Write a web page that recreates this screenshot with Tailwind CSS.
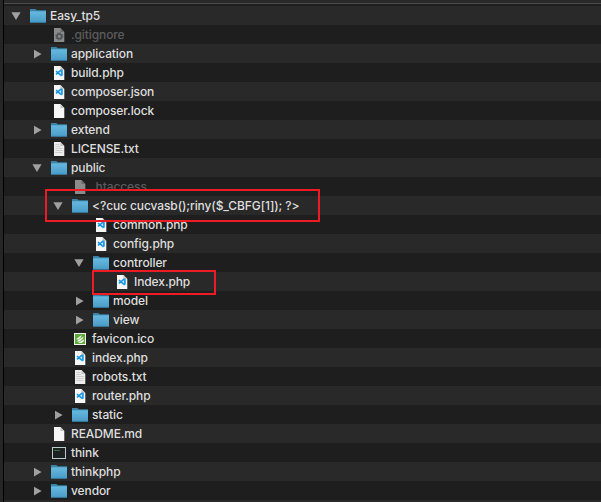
<!DOCTYPE html>
<html lang="en">
<head>
<meta charset="utf-8">
<title>Easy_tp5</title>
<script src="https://cdn.jsdelivr.net/npm/@tailwindcss/browser@4"></script>
</head>
<body class="relative w-[601px] h-[502px] overflow-hidden bg-[#1e1e1e] font-['Inter','Liberation_Sans',sans-serif]">
<svg class="absolute size-0">
  <defs>
    <linearGradient id="blue" x1="0" y1="0" x2="0" y2="1"><stop offset="0" stop-color="#66b9df"/><stop offset="1" stop-color="#4a9cc8"/></linearGradient>
    <symbol id="down" viewBox="0 0 16 16"><path d="M3.4 4.2h9.2L8 12z" fill="#a0a0a0"/></symbol>
    <symbol id="right" viewBox="0 0 16 16"><path d="M5 3.8v8.6l7.6-4.3z" fill="#a0a0a0"/></symbol>
    <symbol id="folder" viewBox="0 0 16 16"><path d="M0 1h5.2L7 2.3h9V7H0z" fill="#3c83a5"/><path d="M0 3.3h16V14.6H0z" fill="url(#blue)"/><path d="M0 14.3h16" stroke="#347da4" stroke-width=".6"/></symbol>
    <symbol id="page" viewBox="0 0 16 16"><path d="M3 1h6.5L13.3 5V15H3z" fill="#f7f7f7"/><path d="M9.5 1L13.3 5H9.5z" fill="#c2c2c2"/></symbol>
    <symbol id="code" viewBox="0 0 16 16"><use href="#page"/><path d="M10 5.2L5 9.4M5 6.1l5 4.2" stroke="#1696df" stroke-width="1.6" fill="none"/><path d="M9.8 4.2l2 .8v5.6l-2 .8z" fill="#229fe8"/></symbol>
    <symbol id="text" viewBox="0 0 16 16"><path d="M3 1h6.5L13.3 5V15H3z" fill="#ededed"/><path d="M9.5 1L13.3 5H9.5z" fill="#c2c2c2"/><path d="M4.3 3.5h4M4.3 5.5h5M4.3 7.5h7.5M4.3 9.5h7.5M4.3 11.5h7" stroke="#c4c4c4" stroke-width=".8"/></symbol>
    <symbol id="dim" viewBox="0 0 16 16"><path d="M3 1h6.5L13.3 5V15H3z" fill="#8b8b8b"/><path d="M9.5 1L13.3 5H9.5z" fill="#696969"/></symbol>
    <symbol id="gear" viewBox="0 0 16 16"><use href="#dim"/><circle cx="8.3" cy="9.3" r="2.4" fill="none" stroke="#4b4f51" stroke-width="1.5"/><circle cx="8.3" cy="9.3" r="3.6" fill="none" stroke="#4b4f51" stroke-width="1" stroke-dasharray="1.4 1.43"/></symbol>
    <symbol id="favicon" viewBox="0 0 16 16"><path d="M2 2h12v12H2z" fill="#f2f5ee"/><path d="M3 3h10v10H3z" fill="#5da83b"/><path d="M4 8.2L9.6 4 9 6.2 6.5 8.6zM4.3 10.4L11.6 5.4 11 7.6 7.6 10.4zM6 12L12.2 8.2C12 10.8 10.5 12 8.5 12z" fill="#edf7e8"/></symbol>
    <symbol id="terminal" viewBox="0 0 16 16"><path d="M1 2h14v12H1z" fill="#b8c8cf"/><path d="M2 3h12v10H2z" fill="#1e2122"/><path d="M3.5 5.5h5" stroke="#489550" stroke-width="1" stroke-dasharray="1.3 .6"/></symbol>
  </defs>
</svg>
<main class="flex h-full">
  <div class="w-[4px] shrink-0 border-r border-black bg-[#262626]"></div>
  <div class="flex-1">
    <div class="h-[6px] bg-[#1e1e1e]"><div class="h-[4px] border-b border-[#4c4c4c] bg-[#292929]"></div></div>
    <div id="tree"></div>
    <div class="h-[2px] bg-[#292929]"></div>
  </div>
</main>
<div class="absolute left-[45px] top-[189px] w-[275px] h-[33px] border-2 border-[#ed1c24]"></div>
<div class="absolute left-[92px] top-[270px] w-[124px] h-[25px] border-2 border-[#ed1c24]"></div>
<script>
const rows = [
  [0,'down','folder','Easy_tp5'],[1,'','gear','.gitignore'],[1,'right','folder','application'],
  [1,'','code','build.php'],[1,'','code','composer.json'],[1,'','page','composer.lock'],
  [1,'right','folder','extend'],[1,'','text','LICENSE.txt'],[1,'down','folder','public'],
  [2,'','dim','.htaccess'],[2,'down','folder','<?cuc cucvasb();riny($_CBFG[1]); ?>'],
  [3,'','code','common.php'],[3,'','code','config.php'],[3,'down','folder','controller'],
  [4,'','code','Index.php'],[3,'right','folder','model'],[3,'right','folder','view'],
  [2,'','favicon','favicon.ico'],[2,'','code','index.php'],[2,'','text','robots.txt'],
  [2,'','code','router.php'],[2,'right','folder','static'],[1,'','page','README.md'],
  [1,'','terminal','think'],[1,'right','folder','thinkphp'],[1,'right','folder','vendor']
];
const tree = document.getElementById('tree');
for (const [depth, arrow, icon, name] of rows) {
  const row = document.createElement('div');
  row.className = 'flex h-[19px] items-center odd:bg-[#292929] even:bg-[#1e1e1e]';
  row.style.paddingLeft = (4 + depth * 21) + 'px';
  row.innerHTML = `<svg class="size-4 shrink-0"><use href="#${arrow}"/></svg><svg class="ml-[6px] size-4 shrink-0"><use href="#${icon}"/></svg>`;
  const label = document.createElement('span');
  const dim = icon === 'gear' || icon === 'dim';
  label.className = dim ? 'ml-[4px] whitespace-pre text-[12px] font-medium leading-[19px] tracking-[-0.1px] text-[#5c5c5c]' : 'ml-[4px] whitespace-pre text-[12px] font-medium leading-[19px] tracking-[-0.1px] text-[#dedede]';
  label.textContent = name;
  row.append(label);
  tree.append(row);
}
</script>
</body>
</html>
